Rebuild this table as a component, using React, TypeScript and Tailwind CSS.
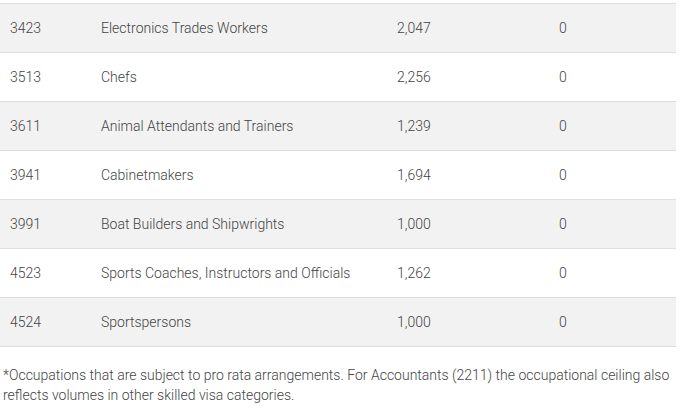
const rows = [
  { code: "3423", name: "Electronics Trades Workers", ceiling: "2,047", count: "0" },
  { code: "3513", name: "Chefs", ceiling: "2,256", count: "0" },
  { code: "3611", name: "Animal Attendants and Trainers", ceiling: "1,239", count: "0" },
  { code: "3941", name: "Cabinetmakers", ceiling: "1,694", count: "0" },
  { code: "3991", name: "Boat Builders and Shipwrights", ceiling: "1,000", count: "0" },
  { code: "4523", name: "Sports Coaches, Instructors and Officials", ceiling: "1,262", count: "0" },
  { code: "4524", name: "Sportspersons", ceiling: "1,000", count: "0" },
];

export default function App() {
  return (
    <div className="h-[416px] w-[680px] overflow-hidden bg-white pt-[3px] font-['Roboto',sans-serif] text-[14px] font-light text-[#444]">
      <div className="w-[676px] border-t border-[#dddddd]">
        {rows.map((r, i) => (
          <div
            key={r.code}
            className={`grid h-[49px] grid-cols-[101px_296px_162px_1fr] items-center border-b border-[#dddddd] ${
              i % 2 === 0 ? "bg-[#f2f2f2]" : "bg-white"
            }`}
          >
            <span className="pl-[10px]">{r.code}</span>
            <span>{r.name}</span>
            <span>{r.ceiling}</span>
            <span>{r.count}</span>
          </div>
        ))}
      </div>
      <p className="mt-[18px] w-[676px] pl-[3px] leading-[20px]">
        *Occupations that are subject to pro rata arrangements. For Accountants (2211) the occupational ceiling also reflects volumes in other skilled visa categories.
      </p>
    </div>
  );
}
